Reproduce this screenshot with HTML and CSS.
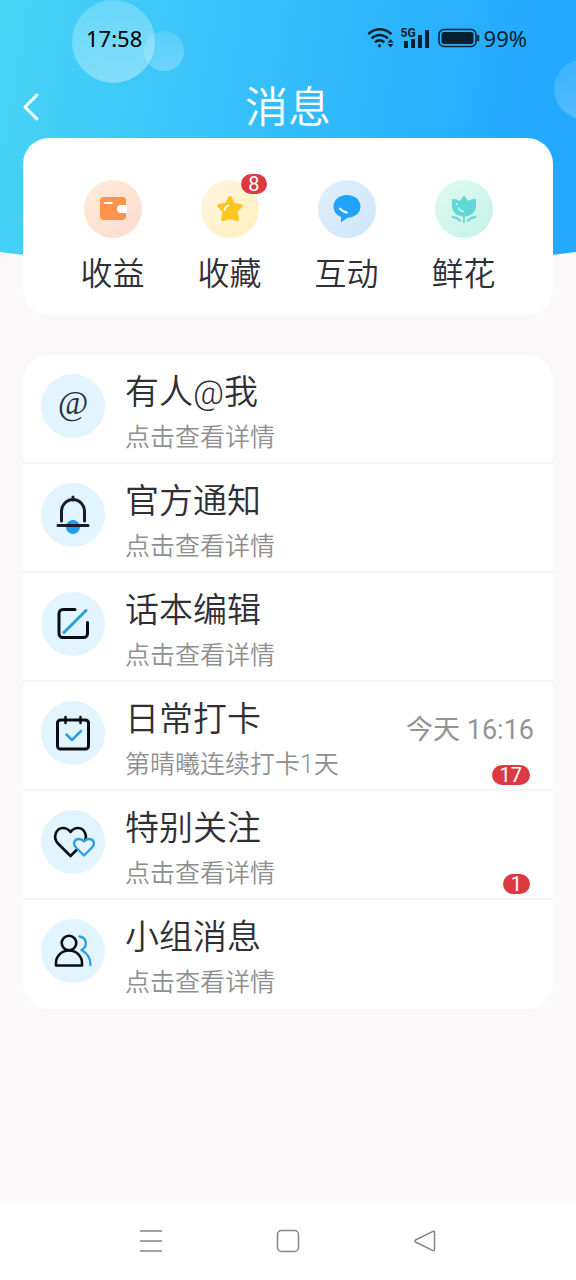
FILE: index.html
```html
<!DOCTYPE html>
<html lang="zh-CN">
<head>
<meta charset="utf-8">
<meta name="viewport" content="width=device-width, initial-scale=1">
<title>消息</title>
<link rel="stylesheet" href="styles.css">
</head>
<body>
<header class="hero">
  <span class="bubble bubble-large"></span>
  <span class="bubble bubble-small"></span>
  <span class="bubble bubble-edge"></span>
  <div class="status">
    <span>17:58</span>
    <div class="status-right">
      <svg width="28" height="22" viewBox="0 0 28 22" fill="none" stroke="#06202f" stroke-width="2.400">
        <path d="M1.300 7Q12.500-2.500 24.500 7M4.500 11.300Q12.500 4.500 21 11.300M8 15.300Q12.500 11.300 17.500 15.300"/>
        <circle cx="12.500" cy="18.800" r="1.700" fill="#06202f" stroke="none"/>
        <path d="M20.500 15.500l3-3.500 3 3.500zM20.500 17l3 3.500 3-3.500z" fill="#06202f" stroke="none"/>
      </svg>
      <span class="signal">
        <span class="network">5G</span>
        <svg width="28" height="22" viewBox="0 0 28 22" fill="#06202f"><path d="M3 14h4v7H3zM10 12h4v9h-4zM17 8h4v13h-4zM24 3h4v18h-4z"/></svg>
      </span>
      <svg class="battery" width="42" height="20" viewBox="0 0 42 20" fill="none">
        <rect x="1" y="1.500" width="37" height="17" rx="5" stroke="#06202f" stroke-width="1.500"/>
        <rect x="3.500" y="4" width="32" height="12" rx="2.500" fill="#06202f"/>
        <path d="M40.200 7v6" stroke="#06202f" stroke-width="2"/>
      </svg>
      <span>99%</span>
    </div>
  </div>
  <div class="titlebar">
    <button class="back" type="button" aria-label="返回">
      <svg width="16" height="28" viewBox="0 0 16 28" fill="none" stroke="#fff" stroke-width="3" stroke-linecap="round" stroke-linejoin="round"><path d="M14 2L2 14l12 12"/></svg>
    </button>
    <h1>消息</h1>
  </div>
</header>

<main>
  <nav class="card tabs">
    <a href="#income">
      <span class="tab-icon orange">
        <svg width="28" height="24" viewBox="0 0 28 24"><rect x="1" y="0" width="26" height="23" rx="4" fill="#ff924c"/><path d="M6 6h7" stroke="#fff" stroke-width="2" stroke-linecap="round"/><path d="M28 8h-6a4 4 0 0 0 0 8h6z" fill="#fff"/></svg>
      </span>收益</a>
    <a href="#favorites">
      <span class="tab-icon yellow">
        <svg width="28" height="28" viewBox="0 0 28 28"><path d="M14 3l3.200 6.800 7.600 1.100-5.500 5.300 1.700 8-7-2.200-7 2.200 1.700-8-5.500-5.300 7.600-1.100z" fill="#ffc524" stroke="#ffc524" stroke-width="4" stroke-linejoin="round"/><path d="M8.500 15q.5-3.500 4-4.500" fill="none" stroke="#fff" stroke-width="1.800" stroke-linecap="round"/></svg>
        <span class="badge corner">8</span>
      </span>收藏</a>
    <a href="#interact">
      <span class="tab-icon blue">
        <svg width="28" height="28" viewBox="0 0 28 28"><path d="M14 0C6 0 .5 5 .5 11.500c0 5 3 8.500 7.500 10.500v4.300q0 1 1 .4l5.300-4C22 22.500 27.500 18 27.500 11.500S22 0 14 0z" fill="#22a3fb"/><path d="M7 13.500q2.500 3.500 7 4" fill="none" stroke="#fff" stroke-width="2" stroke-linecap="round"/></svg>
      </span>互动</a>
    <a href="#flowers">
      <span class="tab-icon green">
        <svg width="28" height="28" viewBox="0 0 28 28" fill="none" stroke-linecap="round"><path d="M2.500 4.500q4 0 7.500 2l4-5.500 4 5.500q3.500-2 7.500-2v6.500c0 6-4.500 10-11.500 10s-11.500-4-11.500-10z" fill="#5fd9d5" stroke="#5fd9d5" stroke-linejoin="round"/><path d="M14 20v7M10.500 26q-3-3.500-8-4M17.500 26q3-3.500 8-4" stroke="#5fd9d5" stroke-width="1.800"/><path d="M8.500 13q1.500 3 4.500 3.500" stroke="#dff8f4" stroke-width="1.500"/><circle cx="6.500" cy="9" r="1" fill="#dff8f4"/></svg>
      </span>鲜花</a>
  </nav>

  <section class="card list">
    <a class="row" href="#mentions">
      <span class="row-icon at">@</span>
      <span class="row-text"><strong>有人@我</strong><small>点击查看详情</small></span>
    </a>
    <a class="row" href="#official">
      <span class="row-icon">
        <svg width="44" height="44" viewBox="0 0 44 44" fill="none" stroke="#181b2c" stroke-width="3" stroke-linecap="round"><circle cx="22" cy="34" r="7" fill="#1f9bf0" stroke="none"/><path d="M10.500 28V18.500a11.500 12 0 0 1 23 0V28M22 4v3M7 32.500h30"/></svg>
      </span>
      <span class="row-text"><strong>官方通知</strong><small>点击查看详情</small></span>
    </a>
    <a class="row" href="#script">
      <span class="row-icon">
        <svg width="44" height="44" viewBox="0 0 44 44" fill="none" stroke="#080d12" stroke-width="3" stroke-linecap="round"><path d="M24 7.500H12a4 4 0 0 0-4 4v20a4 4 0 0 0 4 4h20.500a4 4 0 0 0 4-4V20.500"/><path d="M13 30.500L35 8.500" stroke="#2d9edc"/></svg>
      </span>
      <span class="row-text"><strong>话本编辑</strong><small>点击查看详情</small></span>
    </a>
    <a class="row" href="#checkin">
      <span class="row-icon">
        <svg width="44" height="44" viewBox="0 0 44 44" fill="none" stroke="#080d12" stroke-width="3" stroke-linecap="round" stroke-linejoin="round"><rect x="6.500" y="9" width="31" height="29" rx="3"/><path d="M14.500 6v6M29.500 6v6" stroke-width="2.500"/><path d="M15.500 23.500l5.500 5.500 9-9" stroke="#2d9edc" stroke-width="2.500"/></svg>
      </span>
      <span class="row-text"><strong>日常打卡</strong><small>第晴曦连续打卡1天</small></span>
      <span class="row-meta"><time>今天 16:16</time><span class="badge">17</span></span>
    </a>
    <a class="row" href="#following">
      <span class="row-icon">
        <svg width="44" height="44" viewBox="0 0 44 44" fill="none" stroke="#080d12" stroke-width="2.600" stroke-linejoin="round"><path d="M19.500 36L7 23.500C1 17 5.500 8 12 8q4.500 0 7.500 4Q22.500 8 27 8c6.500 0 11 9 5 15.500z"/><path d="M33 35.500l-8-8c-4-4.500-1-8.500 3-8.500q3 0 5 2.500Q35 19 38 19c4 0 7 4 3 8.500z" fill="#e4f4fe" stroke="#2d9edc" stroke-width="2.300"/></svg>
      </span>
      <span class="row-text"><strong>特别关注</strong><small>点击查看详情</small></span>
      <span class="row-meta"><span class="badge">1</span></span>
    </a>
    <a class="row" href="#groups">
      <span class="row-icon">
        <svg width="44" height="44" viewBox="0 0 44 44" fill="none" stroke="#080d12" stroke-width="2.600" stroke-linecap="round" stroke-linejoin="round"><circle cx="18" cy="14" r="7.300"/><path d="M5 36.500V34a13 12.500 0 0 1 26 0v2.500z"/><path d="M28.500 7.500c7 1 9 9 2 13.500q9 5 9 15" stroke="#2d9edc" stroke-width="2.300"/></svg>
      </span>
      <span class="row-text"><strong>小组消息</strong><small>点击查看详情</small></span>
    </a>
  </section>
</main>

<footer class="navbar">
  <button type="button" aria-label="最近任务"><svg width="24" height="24" viewBox="0 0 24 24" fill="none" stroke="#858585" stroke-width="1.500"><path d="M1 2h22M1 12h22M1 22h22"/></svg></button>
  <button type="button" aria-label="主页"><svg width="24" height="24" viewBox="0 0 24 24" fill="none" stroke="#858585" stroke-width="1.500"><rect x="1.500" y="1.500" width="21" height="21" rx="4"/></svg></button>
  <button type="button" aria-label="返回上级"><svg width="24" height="24" viewBox="0 0 24 24" fill="none" stroke="#858585" stroke-width="1.500" stroke-linejoin="round"><path d="M2.500 11L20 2.300q1.500-.6 1.500 1v17.400q0 1.600-1.500 1L2.500 13q-1.500-1 0-2z"/></svg></button>
</footer>
</body>
</html>
```
FILE: styles.css
```css
* {
  box-sizing: border-box;
}

body {
  margin: 0;
  min-height: 100vh;
  display: flex;
  flex-direction: column;
  background: #faf8f9;
  color: #2f2f35;
  font-family: Roboto, "Noto Sans CJK SC", sans-serif;
  font-weight: 350;
}

a {
  color: inherit;
  text-decoration: none;
}

button {
  padding: 0;
  border: 0;
  background: none;
}

svg {
  display: block;
}

/* Header */
.hero {
  position: relative;
  overflow: hidden;
  padding-bottom: 132px;
  background: linear-gradient(100deg, #48d5f5 0%, #36c0fb 42%, #23a9ff 88%);
  clip-path: ellipse(139% 100% at 50% 0);
}

.bubble {
  position: absolute;
  border-radius: 50%;
  background: linear-gradient(160deg, rgba(255, 255, 255, 0.18), rgba(255, 255, 255, 0.38));
}

.bubble-large {
  left: 72px;
  top: 0;
  width: 83px;
  height: 83px;
}

.bubble-small {
  left: 144px;
  top: 31px;
  width: 40px;
  height: 40px;
  background: linear-gradient(160deg, rgba(255, 255, 255, 0.1), rgba(255, 255, 255, 0.28));
}

.bubble-edge {
  right: -38px;
  top: 59px;
  width: 60px;
  height: 60px;
  background: linear-gradient(160deg, rgba(255, 255, 255, 0.1), rgba(255, 255, 255, 0.24));
}

.status {
  position: relative;
  display: flex;
  justify-content: space-between;
  align-items: center;
  height: 76px;
  padding: 0 49px 0 86px;
  color: #06202f;
  font: 400 22px "Noto Sans", sans-serif;
}

.status > span {
  color: #000;
}

.status-right,
.signal {
  display: flex;
  align-items: center;
}

.signal {
  position: relative;
  margin: 0 9px 0 6px;
}

.network {
  position: absolute;
  left: 0;
  top: 0;
  font: 700 12px/12px Roboto, sans-serif;
}

.battery {
  margin-right: 4px;
}

.titlebar {
  display: grid;
  grid-template-columns: 1fr auto 1fr;
  align-items: center;
  height: 62px;
  padding: 0 23px;
  color: #fff;
}

.back {
  justify-self: start;
}

h1 {
  margin: 0;
  padding-top: 2px;
  font-size: 43px;
  line-height: 60px;
  font-weight: 350;
}

/* Cards */
main {
  position: relative;
  flex: 1;
  display: flex;
  flex-direction: column;
  gap: 40px;
  margin-top: -132px;
  padding: 0 23px 40px;
}

.card {
  background: #fff;
  border-radius: 26px;
}

.tabs {
  display: grid;
  grid-template-columns: repeat(4, 1fr);
  padding: 42px 31px 18px;
}

.tabs a {
  display: flex;
  flex-direction: column;
  align-items: center;
  gap: 13px;
  font-size: 32px;
  line-height: 46px;
}

.tab-icon {
  position: relative;
  display: grid;
  place-items: center;
  width: 58px;
  height: 58px;
  border-radius: 50%;
}

.orange {
  background: linear-gradient(135deg, #ffecd8, #fddbce);
}

.yellow {
  background: linear-gradient(135deg, #fff6e2, #fff0bd);
}

.blue {
  background: linear-gradient(135deg, #e0effb, #cde6fd);
}

.green {
  background: linear-gradient(135deg, #e0faf0, #c4f2ea);
}

.badge {
  padding: 0 8px;
  border-radius: 10px;
  background: #dc3a43;
  color: #fff;
  font-size: 20px;
  line-height: 20px;
  font-weight: 400;
}

.corner {
  position: absolute;
  top: -6px;
  right: -8px;
  padding: 0 7px;
}

/* Message list */
.list {
  overflow: hidden;
}

.row {
  display: flex;
  align-items: flex-start;
  padding: 13px 19px 2px 18px;
  border-bottom: 2px solid #f5f5f6;
}

.row:last-child {
  border-color: #fff;
}

.row-icon {
  flex: none;
  display: grid;
  place-items: center;
  width: 64px;
  height: 64px;
  margin: 6px 20px 0 0;
  border-radius: 50%;
  background: #e2f4fe;
}

.at {
  padding-bottom: 6px;
  color: #22343f;
  font: italic 400 33px/58px "Liberation Serif", serif;
}

.row-text {
  flex: 1;
  display: flex;
  flex-direction: column;
}

.row-text strong {
  font-size: 34px;
  line-height: 48px;
  font-weight: 350;
}

.row-text small {
  color: #8f8f91;
  font-size: 25px;
  line-height: 44px;
}

.row-meta {
  align-self: flex-end;
  display: flex;
  flex-direction: column;
  align-items: flex-end;
  gap: 19px;
  padding-bottom: 2px;
}

.row-meta time {
  color: #949496;
  font-size: 27px;
  line-height: 32px;
  font-weight: 400;
}

.row-meta .badge {
  margin-right: 4px;
}

/* System navigation */
.navbar {
  display: grid;
  grid-template-columns: repeat(3, 1fr);
  place-items: center;
  height: 79px;
  padding: 0 82px;
  background: #fff;
}
```
